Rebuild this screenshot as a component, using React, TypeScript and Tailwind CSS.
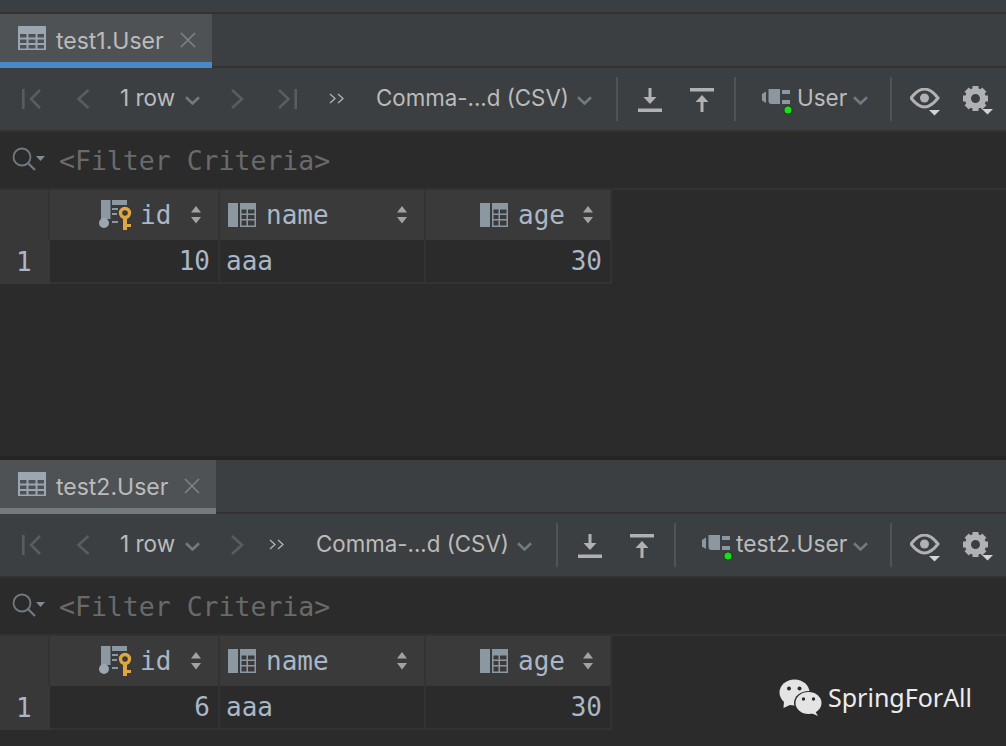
const ui = 'font-["Inter","Liberation_Sans",sans-serif]';
const mono = 'font-["DejaVu_Sans_Mono","Liberation_Mono",monospace]';

function TableIcon() {
  return (
    <svg width="28" height="24" viewBox="0 0 28 24" className="shrink-0">
      <rect x="0" y="0" width="28" height="24" fill="#9aa7b0" />
      <g fill="#4e5254">
        <rect x="2" y="8" width="6.5" height="3.5" />
        <rect x="10.5" y="8" width="7" height="3.5" />
        <rect x="19.5" y="8" width="6.5" height="3.5" />
        <rect x="2" y="13.5" width="6.5" height="3.5" />
        <rect x="10.5" y="13.5" width="7" height="3.5" />
        <rect x="19.5" y="13.5" width="6.5" height="3.5" />
        <rect x="2" y="19" width="6.5" height="3.5" />
        <rect x="10.5" y="19" width="7" height="3.5" />
        <rect x="19.5" y="19" width="6.5" height="3.5" />
      </g>
    </svg>
  );
}

function Tab({ title, width, accent }: { title: string; width: string; accent: string }) {
  return (
    <div className="flex h-[54px] bg-[#3c3f41]">
      <div className={`flex h-full flex-col ${width}`}>
        <div className="flex h-12 items-center bg-[#4e5254] pl-[18px]">
          <TableIcon />
          <span className={`${ui} ml-[10px] mt-[6px] text-[23px] leading-none text-[#bbbbbb]`}>{title}</span>
          <svg width="16" height="16" viewBox="0 0 16 16" className="ml-[16px] mt-[3px]">
            <path d="M1 1 15 15M15 1 1 15" stroke="#7f8385" strokeWidth="1.6" />
          </svg>
        </div>
        <div className={`h-[6px] ${accent}`} />
      </div>
      <div className="mt-auto h-[2px] flex-1 bg-[#323232]" />
    </div>
  );
}

function Chevron({ className }: { className: string }) {
  return (
    <svg width="15" height="9" viewBox="0 0 15 9" className={`shrink-0 ${className}`}>
      <path d="M1 1.200 7.500 7.500 14 1.200" fill="none" stroke="#6e7b83" strokeWidth="2.600" />
    </svg>
  );
}

function Sep({ className }: { className: string }) {
  return <div className={`h-11 w-[2px] shrink-0 bg-[#515355] ${className}`} />;
}

function Nav({ d, w, className }: { d: string; w: number; className: string }) {
  return (
    <svg width={w} height="20" viewBox={`0 0 ${w} 20`} className={`shrink-0 ${className}`}>
      <path d={d} fill="none" stroke="#5a5d5f" strokeWidth="2.600" />
    </svg>
  );
}

function More({ className }: { className: string }) {
  return (
    <svg width="15" height="11" viewBox="0 0 15 11" className={`shrink-0 ${className}`}>
      <path d="M1 1 6 5.500 1 10M9 1 14 5.500 9 10" fill="none" stroke="#b0b3b5" strokeWidth="1.300" />
    </svg>
  );
}

function Download({ className }: { className: string }) {
  return (
    <svg width="24" height="24" viewBox="0 0 24 24" className={`shrink-0 ${className}`}>
      <path d="M10.500 0h3v9h5L12 16 5.500 9h5zM0 20.500h24V24H0z" fill="#afb1b3" />
    </svg>
  );
}

function Upload({ className }: { className: string }) {
  return (
    <svg width="24" height="24" viewBox="0 0 24 24" className={`shrink-0 ${className}`}>
      <path d="M0 0h24v3.500H0zM12 7l6.500 7h-5v10h-3V14h-5z" fill="#afb1b3" />
    </svg>
  );
}

function Plug({ className }: { className: string }) {
  return (
    <svg width="31" height="30" viewBox="0 0 31 30" className={`shrink-0 ${className}`}>
      <path d="M0 10 4 7.500V19L0 16.500z" fill="#8b98a1" />
      <path d="M6.500 5H18V20H9.500Q6.500 20 6.500 17z" fill="#8b98a1" />
      <rect x="20" y="6" width="8" height="4" fill="#8b98a1" />
      <rect x="20" y="16" width="8" height="4" fill="#8b98a1" />
      <circle cx="26" cy="26" r="4.500" fill="#2a332a" />
      <circle cx="26" cy="26" r="3.500" fill="#12e312" />
    </svg>
  );
}

function Eye({ className }: { className: string }) {
  return (
    <svg width="30" height="28" viewBox="0 0 30 28" className={`shrink-0 ${className}`}>
      <path d="M1 10Q8 1 14.500 1T28 10Q21 19 14.500 19T1 10Z" fill="none" stroke="#afb1b3" strokeWidth="3" />
      <circle cx="14.500" cy="10" r="4.500" fill="#afb1b3" />
      <path d="M19 22h11l-5.500 5.500z" fill="#d0d2d3" />
    </svg>
  );
}

function Gear({ className }: { className: string }) {
  return (
    <svg width="30" height="30" viewBox="0 0 30 30" className={`shrink-0 ${className}`}>
      <g transform="translate(12.500 12.500)">
        <circle r="7.500" fill="none" stroke="#afb1b3" strokeWidth="6" />
        {[0, 45, 90, 135, 180, 225, 270, 315].map((a) => (
          <rect key={a} x="-3" y="-12.500" width="6" height="5" fill="#afb1b3" transform={`rotate(${a})`} />
        ))}
      </g>
      <path d="M19 23h11l-5.500 5.500z" fill="#d0d2d3" />
    </svg>
  );
}

function Toolbar({ second }: { second?: boolean }) {
  const label = `${ui} leading-none whitespace-nowrap text-[#bbbbbb] -mt-[2px]`;
  return (
    <div className="flex h-[62px] items-center bg-[#3c3f41]">
      <Nav d="M1.300 0v20M18 1 9 10l9 9" w={19} className="ml-[22px]" />
      <Nav d="M12.500 1 2.500 10l10 9" w={14} className="ml-[35px]" />
      <span className={`${label} ml-[30px] w-[56px] text-[22.5px]`}>1 row</span>
      <Chevron className="ml-[9px] mt-[2px]" />
      <Nav d="M1 1l10 9-10 9" w={13} className="ml-[31px]" />
      {!second && <Nav d="M1 1l9.500 9-9.500 9M17.700 0v20" w={19} className="ml-[34px]" />}
      <More className={second ? "ml-[25px] -mt-[2px]" : "ml-[32px] -mt-[2px]"} />
      <span className={`${label} ml-[32px] w-[192px] text-[22.3px]`}>Comma-...d (CSV)</span>
      <Chevron className="ml-[9px] mt-[2px]" />
      <Sep className="ml-[24px]" />
      <Download className="ml-[20px] mt-[1px]" />
      <Upload className="ml-[28px] mt-[1px]" />
      <Sep className="ml-[20px]" />
      {second ? (
        <>
          <Plug className="ml-[26px]" />
          <span className={`${label} ml-[3px] w-[112px] text-[22.8px]`}>test2.User</span>
          <Chevron className="ml-[5px] mt-[2px]" />
          <Sep className="ml-[22px]" />
        </>
      ) : (
        <>
          <Plug className="ml-[26px]" />
          <span className={`${label} ml-[4px] w-[50px] text-[22.5px]`}>User</span>
          <Chevron className="ml-[6px] mt-[2px]" />
          <Sep className="ml-[22px]" />
        </>
      )}
      <Eye className="ml-[18px] mt-[6px]" />
      <Gear className="ml-[23px] mt-[4px]" />
    </div>
  );
}

function FilterBar() {
  return (
    <div className="flex h-[56px] items-center bg-[#2b2b2b] pl-3">
      <svg width="34" height="26" viewBox="0 0 34 26" className="shrink-0">
        <circle cx="10" cy="10" r="8.500" fill="none" stroke="#6e7b83" strokeWidth="1.800" />
        <path d="M16 16l7 7" stroke="#6e7b83" strokeWidth="2.200" />
        <path d="M24 9h9l-4.500 5z" fill="#7f8b91" />
      </svg>
      <span className={`${mono} ml-[13px] mt-[2px] text-[26.500px] leading-none text-[#6a6a6a]`}>{"<Filter Criteria>"}</span>
    </div>
  );
}

function Sort() {
  return (
    <svg width="12" height="18" viewBox="0 0 12 18" className="shrink-0">
      <path d="M6 0l5 6.500H1zM6 17.500 1 11h10z" fill="#a0a3a5" />
    </svg>
  );
}

function ColIcon() {
  return (
    <svg width="28" height="24" viewBox="0 0 28 24" className="shrink-0">
      <rect x="0" y="0" width="10" height="24" fill="#8b98a1" />
      <path d="M12 0h16v24H12zM13.500 6.500v4h5v-4zM20 6.500v4h6.500v-4zM13.500 12v4h5v-4zM20 12v4h6.500v-4zM13.500 17.500v5h5v-5zM20 17.500v5h6.500v-5z" fill="#8b98a1" fillRule="evenodd" />
    </svg>
  );
}

function KeyIcon() {
  return (
    <svg width="33" height="30" viewBox="0 0 33 30" className="shrink-0">
      <rect x="2" y="0" width="9.500" height="19" fill="#8b98a1" />
      <path d="M13 0h15v5H13zM13 8h6v2h-6zM13 13h5v2h-5zM13 21h6v2h-6z" fill="#8b98a1" />
      <circle cx="5" cy="23" r="5" fill="#9aa7b0" />
      <path d="M24 16h4v8h4v3h-4v3h-4z" fill="#e0a63f" />
      <circle cx="26" cy="13" r="4.500" fill="none" stroke="#e0a63f" strokeWidth="3.400" />
    </svg>
  );
}

function ColHead({ name, icon, width }: { name: string; icon: React.ReactNode; width: string }) {
  return (
    <div className={`flex h-full shrink-0 items-center border-r-2 border-[#333333] pr-4 pl-2 ${width}`}>
      {icon}
      <span className={`${mono} ml-[10px] mr-auto text-[26px] leading-none text-[#a9b7c6]`}>{name}</span>
      <Sort />
    </div>
  );
}

function DataTable({ id }: { id: string }) {
  const cell = `${mono} flex h-full shrink-0 items-center border-r-2 border-[#333333] text-[26px] leading-none text-[#a9b7c6]`;
  return (
    <div className="w-[612px]">
      <div className="flex h-[50px] bg-[#3a3a3a]">
        <div className="h-full w-[50px] shrink-0 border-r-2 border-[#333333] bg-[#383838]" />
        <div className="flex h-full w-[170px] shrink-0 items-center border-r-2 border-[#333333] pr-4 pl-[49px]">
          <KeyIcon />
          <span className={`${mono} ml-[8px] mr-auto text-[26px] leading-none text-[#a9b7c6]`}>id</span>
          <Sort />
        </div>
        <ColHead name="name" icon={<ColIcon />} width="w-[206px]" />
        <div className="flex h-full w-[186px] shrink-0 items-center border-r-2 border-[#333333] pr-[16px] pl-[54px]">
          <ColIcon />
          <span className={`${mono} ml-[10px] mr-auto text-[26px] leading-none text-[#a9b7c6]`}>age</span>
          <Sort />
        </div>
      </div>
      <div className="flex h-[44px]">
        <div className={`${mono} flex h-full w-[50px] shrink-0 items-center bg-[#383838] pl-[16px] text-[26px] leading-none text-[#a9b7c6]`}>1</div>
        <div className="flex h-full flex-1 border-b-2 border-[#333333]">
          <div className={`${cell} w-[170px] justify-end pr-2`}>{id}</div>
          <div className={`${cell} w-[206px] pl-[6px]`}>aaa</div>
          <div className={`${cell} w-[186px] justify-end pr-2`}>30</div>
        </div>
      </div>
    </div>
  );
}

function WeChat() {
  return (
    <svg width="44" height="38" viewBox="0 0 44 38" className="shrink-0">
      <ellipse cx="15.500" cy="13.500" rx="15" ry="13" fill="#e4e4e4" />
      <path d="M5 22 4.500 29 13 25z" fill="#e4e4e4" />
      <ellipse cx="29.500" cy="24" rx="14.500" ry="12" fill="#2b2b2b" />
      <ellipse cx="29.500" cy="24" rx="13" ry="11" fill="#e4e4e4" />
      <path d="M36 32 39 37 32 34z" fill="#e4e4e4" />
      <circle cx="10" cy="9.500" r="2" fill="#2b2b2b" />
      <circle cx="20.500" cy="9.500" r="2" fill="#2b2b2b" />
      <circle cx="24.500" cy="20" r="1.700" fill="#2b2b2b" />
      <circle cx="34.500" cy="20" r="1.700" fill="#2b2b2b" />
    </svg>
  );
}

export default function App() {
  return (
    <div className="relative h-[746px] w-[1006px] overflow-hidden bg-[#2b2b2b]">
      <div className="h-3 bg-[#3c3f41]" />
      <div className="h-[2px] bg-[#323232]" />
      <Tab title="test1.User" width="w-[212px]" accent="bg-[#4a88c7]" />
      <Toolbar />
      <div className="h-[2px] bg-[#323232]" />
      <FilterBar />
      <div className="h-[2px] bg-[#323232]" />
      <DataTable id="10" />

      <div className="mt-[172px] h-1 bg-[#252525]" />
      <Tab title="test2.User" width="w-[216px]" accent="bg-[#747a7e]" />
      <Toolbar second />
      <div className="h-[2px] bg-[#323232]" />
      <FilterBar />
      <div className="h-[2px] bg-[#323232]" />
      <DataTable id="6" />

      <div className="absolute left-[779px] top-[679px] flex items-center">
        <WeChat />
        <span className='ml-[5px] -mt-[1px] font-["Noto_Sans",sans-serif] text-[25px] leading-none text-[#ececec]'>SpringForAll</span>
      </div>
    </div>
  );
}
